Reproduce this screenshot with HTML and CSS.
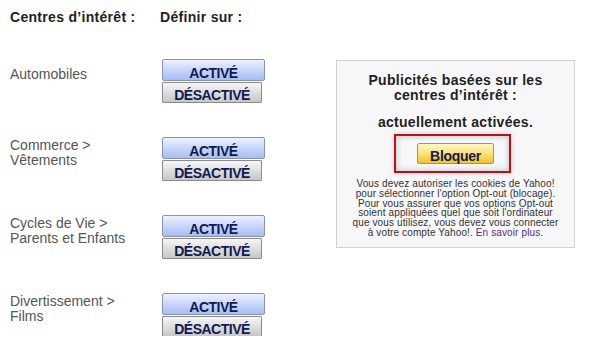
FILE: index.html
```html
<!DOCTYPE html>
<html lang="fr">
<head>
    <meta charset="UTF-8">
    <title>Centres d'intérêt</title>
    <link rel="stylesheet" href="styles.css">
</head>
<body>
    <div class="page">
        <div class="topics">
            <div class="head">
                <span class="head-topic">Centres d’intérêt :</span>
                <span>Définir sur :</span>
            </div>
            <div class="rows">
                <div class="row">
                    <div class="label single">Automobiles</div>
                    <div class="buttons">
                        <button class="btn-on">ACTIVÉ</button>
                        <button class="btn-off">DÉSACTIVÉ</button>
                    </div>
                </div>
                <div class="row">
                    <div class="label">Commerce &gt;<br>Vêtements</div>
                    <div class="buttons">
                        <button class="btn-on">ACTIVÉ</button>
                        <button class="btn-off">DÉSACTIVÉ</button>
                    </div>
                </div>
                <div class="row">
                    <div class="label">Cycles de Vie &gt;<br>Parents et Enfants</div>
                    <div class="buttons">
                        <button class="btn-on">ACTIVÉ</button>
                        <button class="btn-off">DÉSACTIVÉ</button>
                    </div>
                </div>
                <div class="row">
                    <div class="label">Divertissement &gt;<br>Films</div>
                    <div class="buttons">
                        <button class="btn-on">ACTIVÉ</button>
                        <button class="btn-off">DÉSACTIVÉ</button>
                    </div>
                </div>
            </div>
        </div>

        <div class="status-box">
            <p class="status-title">Publicités basées sur les<br>centres d’intérêt :</p>
            <p class="status-state">actuellement activées.</p>
            <div class="highlight">
                <button class="btn-block">Bloquer</button>
            </div>
            <p class="note">
                Vous devez autoriser les cookies de Yahoo!<br>
                pour sélectionner l'option Opt-out (blocage).<br>
                Pour vous assurer que vos options Opt-out<br>
                soient appliquées quel que soit l'ordinateur<br>
                que vous utilisez, vous devez vous connecter<br>
                à votre compte Yahoo!. <a href="#">En savoir plus</a>.
            </p>
        </div>
    </div>
</body>
</html>
```

FILE: styles.css
```css
body {
    margin: 0;
    background: #fff;
    font-family: "Liberation Sans", Arial, sans-serif;
}

.page {
    display: flex;
    padding: 10px 0 0 10px;
}

.topics {
    width: 326px;
}

.head {
    display: flex;
    font-size: 14px;
    font-weight: bold;
    letter-spacing: 0.3px;
    line-height: 15px;
    color: #222;
}

.head-topic {
    width: 150px;
}

.rows {
    margin-top: 34px;
}

.row {
    display: flex;
    height: 43px;
    margin-bottom: 35px;
}

.row:last-child {
    margin-bottom: 0;
}

.label {
    width: 152px;
    padding-top: 1px;
    font-size: 14px;
    line-height: 15px;
    color: #555;
}

.label.single {
    padding-top: 8px;
}

.buttons {
    display: flex;
    flex-direction: column;
    gap: 1px;
}

.btn-on,
.btn-off,
.btn-block {
    margin: 0;
    padding: 6px 0 0;
    font-family: "Liberation Sans", Arial, sans-serif;
    font-size: 14px;
    font-weight: bold;
    letter-spacing: -0.5px;
    line-height: 13px;
    cursor: pointer;
}

.btn-on {
    width: 103px;
    height: 22px;
    line-height: 14px;
    border: 1px solid #8594b5;
    border-radius: 2px;
    background: linear-gradient(#eef2ff, #c9d6fb 50%, #a7bdf3);
    color: #0f1b4f;
}

.btn-off {
    width: 100px;
    height: 21px;
    border: 1px solid #8a8a8a;
    border-radius: 1px;
    background: linear-gradient(#f6f6f6, #dedede 50%, #c7c7c7);
    color: #0f1b4f;
}

.status-box {
    display: flex;
    flex-direction: column;
    align-items: center;
    width: 239px;
    height: 188px;
    box-sizing: border-box;
    margin-top: 50px;
    border: 1px solid #d2d2d2;
    background: #f7f7f9;
}

.status-title,
.status-state {
    margin: 0;
    font-size: 14px;
    font-weight: bold;
    letter-spacing: 0.3px;
    line-height: 15px;
    color: #222;
    text-align: center;
}

.status-title {
    margin-top: 12px;
}

.status-state {
    margin-top: 12px;
}

.highlight {
    align-self: flex-start;
    width: 117px;
    height: 39px;
    box-sizing: border-box;
    margin: 4px 0 0 57px;
    padding: 7px 0 0 21px;
    border: 2px solid #b3141b;
    box-shadow: inset 0 0 6px rgba(0, 0, 0, 0.25), 0 0 5px rgba(0, 0, 0, 0.2);
}

.btn-block {
    width: 77px;
    height: 21px;
    border: 1px solid #9a9580;
    border-radius: 2px;
    background: linear-gradient(#fff9c8, #fbe279 50%, #f3c12c);
    color: #161a4e;
    letter-spacing: -0.3px;
}

.note {
    margin: 6px 0 0;
    font-size: 10px;
    letter-spacing: 0.12px;
    line-height: 9.8px;
    color: #333;
    text-align: center;
}

.note a {
    color: #5b2b8c;
    text-decoration: none;
}
```
